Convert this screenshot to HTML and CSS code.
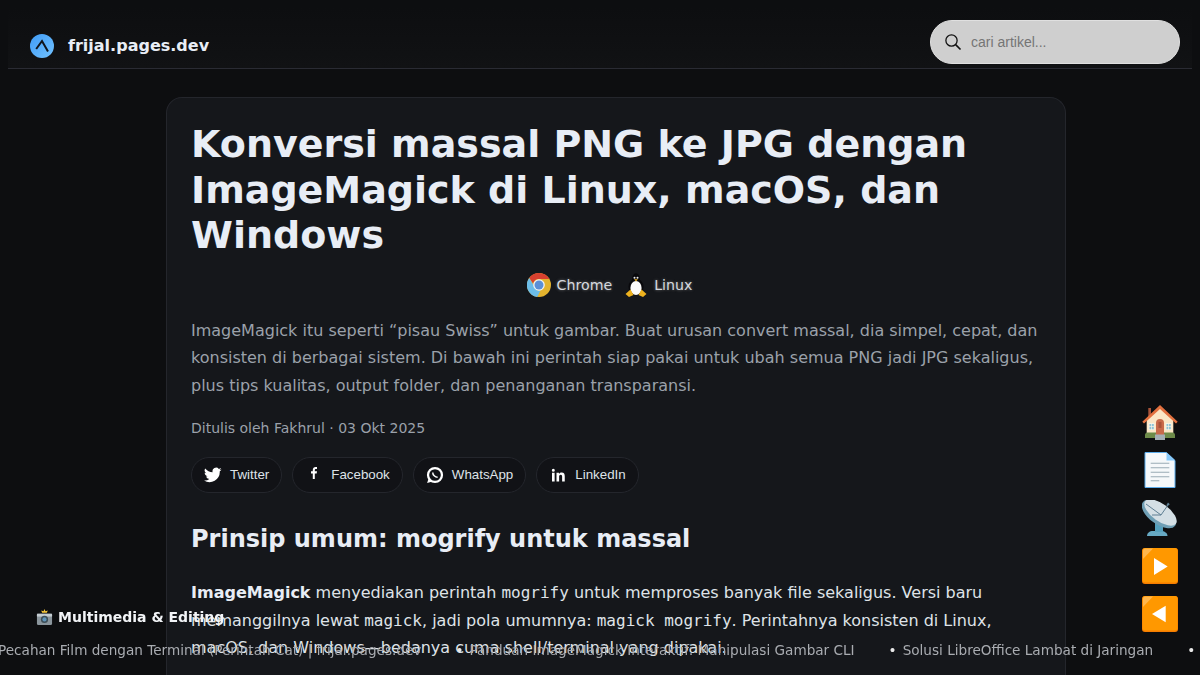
FILE: index.html
```html
<!DOCTYPE html>
<html lang="id">
<head>
<meta charset="utf-8">
<title>Konversi massal PNG ke JPG dengan ImageMagick</title>
<link rel="stylesheet" href="styles.css">
</head>
<body>
<header class="topbar">
  <a class="brand" href="#">
    <svg class="brand-logo" viewBox="0 0 24 24" width="24" height="24"><defs><linearGradient id="lg" x1="0" y1="0" x2="1" y2="1"><stop offset="0" stop-color="#3f9bf5"/><stop offset="1" stop-color="#72c2ff"/></linearGradient></defs><circle cx="12" cy="12" r="12" fill="url(#lg)"/><path d="M6.200 15 12 7l6 10.500" fill="none" stroke="#10151c" stroke-width="2"/></svg>
    <span>frijal.pages.dev</span>
  </a>
  <label class="search">
    <svg viewBox="0 0 24 24" width="18" height="18"><circle cx="10" cy="10" r="7.500" fill="none" stroke="#111" stroke-width="1.700"/><path d="m15.500 15.500 6.500 6.500" stroke="#111" stroke-width="2.200"/></svg>
    <input type="text" placeholder="cari artikel...">
  </label>
</header>

<main class="card">
  <h1>Konversi massal PNG ke JPG dengan ImageMagick di Linux, macOS, dan Windows</h1>
  <div class="tags">
    <span class="tag">
      <svg viewBox="0 0 24 24" width="24" height="24"><circle cx="12" cy="12" r="12" fill="#e3b32e"/><path d="M12 0a12 12 0 0 1 10.400 6H12a6 6 0 0 0-5.800 4.400L2.200 5A12 12 0 0 1 12 0z" fill="#d8402f"/><path d="M2.200 5 7 13a5.500 5.500 0 0 0 6.500 4.500L10.200 24A12 12 0 0 1 2.200 5z" fill="#6cbde8"/><circle cx="12" cy="12" r="5.800" fill="#f2f4f7"/><circle cx="12" cy="12" r="4.500" fill="#5b8fd6"/></svg>
      Chrome
    </span>
    <span class="tag">
      <svg viewBox="0 0 24 24" width="24" height="24"><ellipse cx="12" cy="6.500" rx="4" ry="6.300" fill="#08080b"/><ellipse cx="12" cy="14" rx="7.500" ry="8.500" fill="#08080b"/><ellipse cx="12" cy="15" rx="5.600" ry="7" fill="#fafafa"/><circle cx="10.500" cy="4.800" r="1" fill="#eee"/><circle cx="13.500" cy="4.800" r="1" fill="#eee"/><path d="M10.200 6.300h3.600L12 8.500z" fill="#eeb21e"/><path d="M1.500 21 6.500 16.500 9.500 22 5 24zM22.500 21 17.500 16.500 14.500 22 19 24z" fill="#eeb21e"/></svg>
      Linux
    </span>
  </div>
  <p class="lead">ImageMagick itu seperti “pisau Swiss” untuk gambar. Buat urusan convert massal, dia simpel, cepat, dan konsisten di berbagai sistem. Di bawah ini perintah siap pakai untuk ubah semua PNG jadi JPG sekaligus, plus tips kualitas, output folder, dan penanganan transparansi.</p>
  <p class="meta">Ditulis oleh Fakhrul · 03 Okt 2025</p>
  <nav class="share">
    <a href="#"><svg viewBox="0 0 24 24" width="18" height="18"><path fill="#fff" d="M23.500 4.600a9.500 9.500 0 0 1-2.800.8 4.800 4.800 0 0 0 2.100-2.700 9.600 9.600 0 0 1-3 1.200 4.800 4.800 0 0 0-8.300 4.400A13.600 13.600 0 0 1 1.600 3.200a4.800 4.800 0 0 0 1.500 6.400 4.700 4.700 0 0 1-2.200-.6c0 2.300 1.600 4.300 3.900 4.800a4.800 4.800 0 0 1-2.200.1 4.800 4.800 0 0 0 4.500 3.300A9.600 9.600 0 0 1 0 19.200 13.600 13.600 0 0 0 21 7.100a9.700 9.700 0 0 0 2.500-2.500z"/></svg>Twitter</a>
    <a href="#"><svg viewBox="0 0 18 18" width="18" height="18"><path fill="#fff" d="M7.800 13V7.500H6V5.300h1.800V3.900C7.800 2 8.900 1 10.600 1c.8 0 1.400.1 1.400.1V3h-1c-.9 0-1.200.6-1.200 1.200v1.100H12l-.3 2.200H9.800V13z"/></svg>Facebook</a>
    <a href="#"><svg viewBox="0 0 24 24" width="18" height="18"><circle cx="12" cy="12" r="9.300" fill="none" stroke="#fff" stroke-width="3"/><path fill="#fff" d="M1.500 22.500l2.300-7 5 5z"/><path fill="none" stroke="#fff" stroke-width="2" d="M9 8.500c0 3.500 3 6.500 6.500 6.500"/></svg>WhatsApp</a>
    <a href="#"><svg viewBox="0 0 24 24" width="18" height="18"><path fill="#fff" d="M4 9h3.500v11.500H4zM5.750 3.500a2 2 0 1 1 0 4 2 2 0 0 1 0-4zM10 9h3.300v1.600c.6-1 1.800-1.900 3.500-1.900 3.400 0 4.200 2.200 4.200 5.100v6.700h-3.500v-5.900c0-1.500-.1-3-1.900-3s-2.100 1.400-2.100 2.900v6H10z"/></svg>LinkedIn</a>
  </nav>
  <h2>Prinsip umum: mogrify untuk massal</h2>
  <p class="body"><strong>ImageMagick</strong> menyediakan perintah <code>mogrify</code> untuk memproses banyak file sekaligus. Versi baru memanggilnya lewat <code>magick</code>, jadi pola umumnya: <code>magick mogrify</code>. Perintahnya konsisten di Linux, macOS, dan Windows—bedanya cuma shell/terminal yang dipakai.</p>
</main>

<aside class="dock">
  <a href="#"><svg viewBox="0 0 36 36" width="36" height="36">
    <path d="M6.300 4H9v9H6.300z" fill="#a8533a"/>
    <path d="M4.700 15 18 4l13.300 11v16H4.700z" fill="#fbe6c6"/>
    <path d="M3 34v-3c0-1.500 1-2.500 2.500-2.500h25c1.500 0 2.500 1 2.500 2.500v3z" fill="#6d8a49"/>
    <path d="M18 1 .3 17.700 2 19.500 18 5l16 14.500 1.700-1.800z" fill="#e2703f"/>
    <path d="M14 31V19a4 4 0 0 1 8 0v12z" fill="#c8694a"/>
    <path d="M16.500 18h3v6h-3z" fill="#a8533a"/>
    <path d="M6.500 19h6v7h-6zM23.500 19h6v7h-6z" fill="#f6f2e6"/>
    <path d="M7.500 20h1.800v2.200H7.500zM10 20h1.800v2.200H10zM7.500 23h1.800v2.200H7.500zM10 23h1.800v2.200H10zM24.500 20h1.800v2.200h-1.800zM27 20h1.800v2.200H27zM24.500 23h1.800v2.200h-1.800zM27 23h1.800v2.200H27z" fill="#8fc3d6"/>
    <path d="M13 30.500h10V36H13z" fill="#a4adb3"/>
  </svg></a>
  <a href="#"><svg viewBox="0 0 36 36" width="36" height="36">
    <path d="M3 .5h21.500L33 8.500v27H3z" fill="#f5f8fa" stroke="#5dadec" stroke-width="1"/>
    <path d="M24.500.5 33 8.500h-8.500z" fill="#88c9f9"/>
    <path d="M8.700 11.300h18.600M8.700 15.700h18.600M8.700 20.300h18.600M8.700 24.700h18.600M8.700 28.700h8.600" stroke="#99aab5" stroke-width="1.100"/>
  </svg></a>
  <a href="#"><svg viewBox="0 0 36 36" width="36" height="36">
    <path d="M5 36c0-3 2.500-5 6-5h8c3.500 0 6.500 2 6.500 5z" fill="#66a9c4"/>
    <path d="M13 22h8v10h-8z" fill="#55a0bd"/>
    <ellipse cx="17" cy="14" rx="20" ry="10" transform="rotate(36 17 14)" fill="#6f9fb5"/>
    <ellipse cx="18.500" cy="12.500" rx="19" ry="8.600" transform="rotate(36 18.500 12.500)" fill="#d4dfe5"/>
    <path d="M4 4 19 15M10 15 19 15 26 5" fill="none" stroke="#5f7f93" stroke-width="1"/>
    <path d="M26 2.500l1.800 1.800-2.500 2-1-1z" fill="#5f7f93"/>
  </svg></a>
  <a href="#"><svg viewBox="0 0 36 36" width="36" height="36"><rect width="36" height="36" rx="3" fill="#f57c00"/><rect width="35" height="34.500" rx="2.500" x=".5" fill="#ff9800"/><path d="M1 3a2.500 2.500 0 0 1 2.500-2.500H11L1 11z" fill="#ffb74d"/><path d="M12 10l13.700 8.500L12 27z" fill="#fff"/></svg></a>
  <a href="#"><svg viewBox="0 0 36 36" width="36" height="36"><rect width="36" height="36" rx="3" fill="#f57c00"/><rect width="35" height="34.500" rx="2.500" x=".5" fill="#ff9800"/><path d="M1 3a2.500 2.500 0 0 1 2.500-2.500H11L1 11z" fill="#ffb74d"/><path d="M23.700 9.700 10 18l13.700 8.300z" fill="#fff"/></svg></a>
</aside>

<div class="ticker-label"><svg viewBox="0 0 18 18" width="17" height="17"><rect x="1" y="5" width="16" height="12" rx="1.500" fill="#8a959c"/><rect x="1" y="5" width="16" height="3" fill="#c3ccd1"/><circle cx="9" cy="11" r="3.800" fill="#3d4d57"/><circle cx="9" cy="11" r="2.200" fill="#5f94b8"/><path d="M9 0l1 2.500 2.500-1-1 2.500H6.500l-1-2.500 2.500 1z" fill="#f6c83b"/></svg><strong>Multimedia &amp; Editing</strong></div>
<div class="ticker">
  <span>Pecahan Film dengan Terminal (Perintah Cat) | frijal.pages.dev</span>
  <span class="t-dot">•</span><span>Panduan ImageMagick Interaktif: Manipulasi Gambar CLI</span>
  <span class="t-dot">•</span><span>Solusi LibreOffice Lambat di Jaringan</span>
  <span class="t-dot">•</span>
</div>
</body>
</html>
```
FILE: styles.css
```css
* { box-sizing: border-box; }
html, body { height: 675px; overflow: hidden; }
body {
  margin: 0;
  padding: 8px 8px 0;
  background: #0d0e10;
  color: #e6e9ee;
  font-family: "DejaVu Sans", sans-serif;
}
a { color: inherit; text-decoration: none; }

.topbar {
  height: 61px;
  display: flex;
  align-items: center;
  justify-content: space-between;
  padding: 12px 12px 4px 22px;
  border-bottom: 1px solid #2a2b33;
  background: linear-gradient(#0d0e10, #111214);
}
.brand { display: flex; align-items: center; gap: 14px; font-weight: 700; font-size: 16px; color: #e8edf5; margin-top: 7px; }
.brand-logo { display: block; margin-top: 1px; }
.search {
  width: 250px;
  height: 44px;
  display: flex;
  align-items: center;
  gap: 7px;
  padding: 0 13px;
  border-radius: 22px;
  background: #cfcfcf;
  border: 1px solid #e0e0e0;
}
.search svg { flex: none; }
.search input {
  flex: 1;
  min-width: 0;
  border: 0;
  outline: 0;
  background: transparent;
  font: 14px "Liberation Sans", sans-serif;
}
.search input::placeholder { color: #757575; }

.card {
  width: 900px;
  height: 578px;
  margin: 28px 0 0 158px;
  padding: 24px;
  overflow: hidden;
  background: #15171b;
  border: 1px solid #24262c;
  border-bottom: 0;
  border-radius: 16px 16px 0 0;
}
h1 { margin: 0; font-size: 38px; line-height: 45.600px; font-weight: 700; color: #e8edf5; }
.tags { display: flex; justify-content: center; gap: 12px; margin-top: 13px; height: 27px; padding-right: 13px; }
.tag { display: flex; align-items: center; gap: 6px; font-size: 14.200px; color: #d6d9de; text-shadow: 0 0 3px #777; }
.lead { margin: 18px 0 0; font-size: 16px; line-height: 27.500px; color: #9ba1aa; }
.meta { margin: 19px 0 0; font-size: 14px; line-height: 20px; color: #9ba1aa; }
.share { display: flex; gap: 10px; margin-top: 19px; }
.share a {
  height: 36px;
  display: flex;
  align-items: center;
  gap: 8px;
  padding: 0 12px 2px;
  border: 1px solid #24262c;
  border-radius: 18px;
  background: #111216;
  font: 13.333px "Liberation Sans", sans-serif;
  color: #dfe3e8;
}
.share svg { margin-top: 2px; }
h2 { margin: 30px 0 0; font-size: 24px; line-height: 32px; font-weight: 700; color: #e8edf5; }
.body { margin: 24px 0 0; font-size: 16px; line-height: 27.500px; color: #dfe3e8; }
.body strong { color: #e8edf5; }
code { font-family: "DejaVu Sans Mono", monospace; font-size: 16px; }

.dock {
  position: fixed;
  right: 22px;
  top: 404px;
  display: flex;
  flex-direction: column;
  gap: 12px;
}
.dock a { display: block; height: 36px; }
.dock svg { display: block; }

.ticker-label {
  position: fixed;
  left: 36px;
  top: 607px;
  display: flex;
  align-items: center;
  gap: 5px;
  font-size: 14px;
  line-height: 20px;
  color: #f2f4f7;
}
.ticker {
  position: fixed;
  left: -2px;
  top: 640px;
  display: flex;
  white-space: nowrap;
  font-size: 13.600px;
  line-height: 20px;
  color: #a9acb1;
}
.t-dot { margin: 0 6px 0 34px; color: #e8e8e8; }
```
